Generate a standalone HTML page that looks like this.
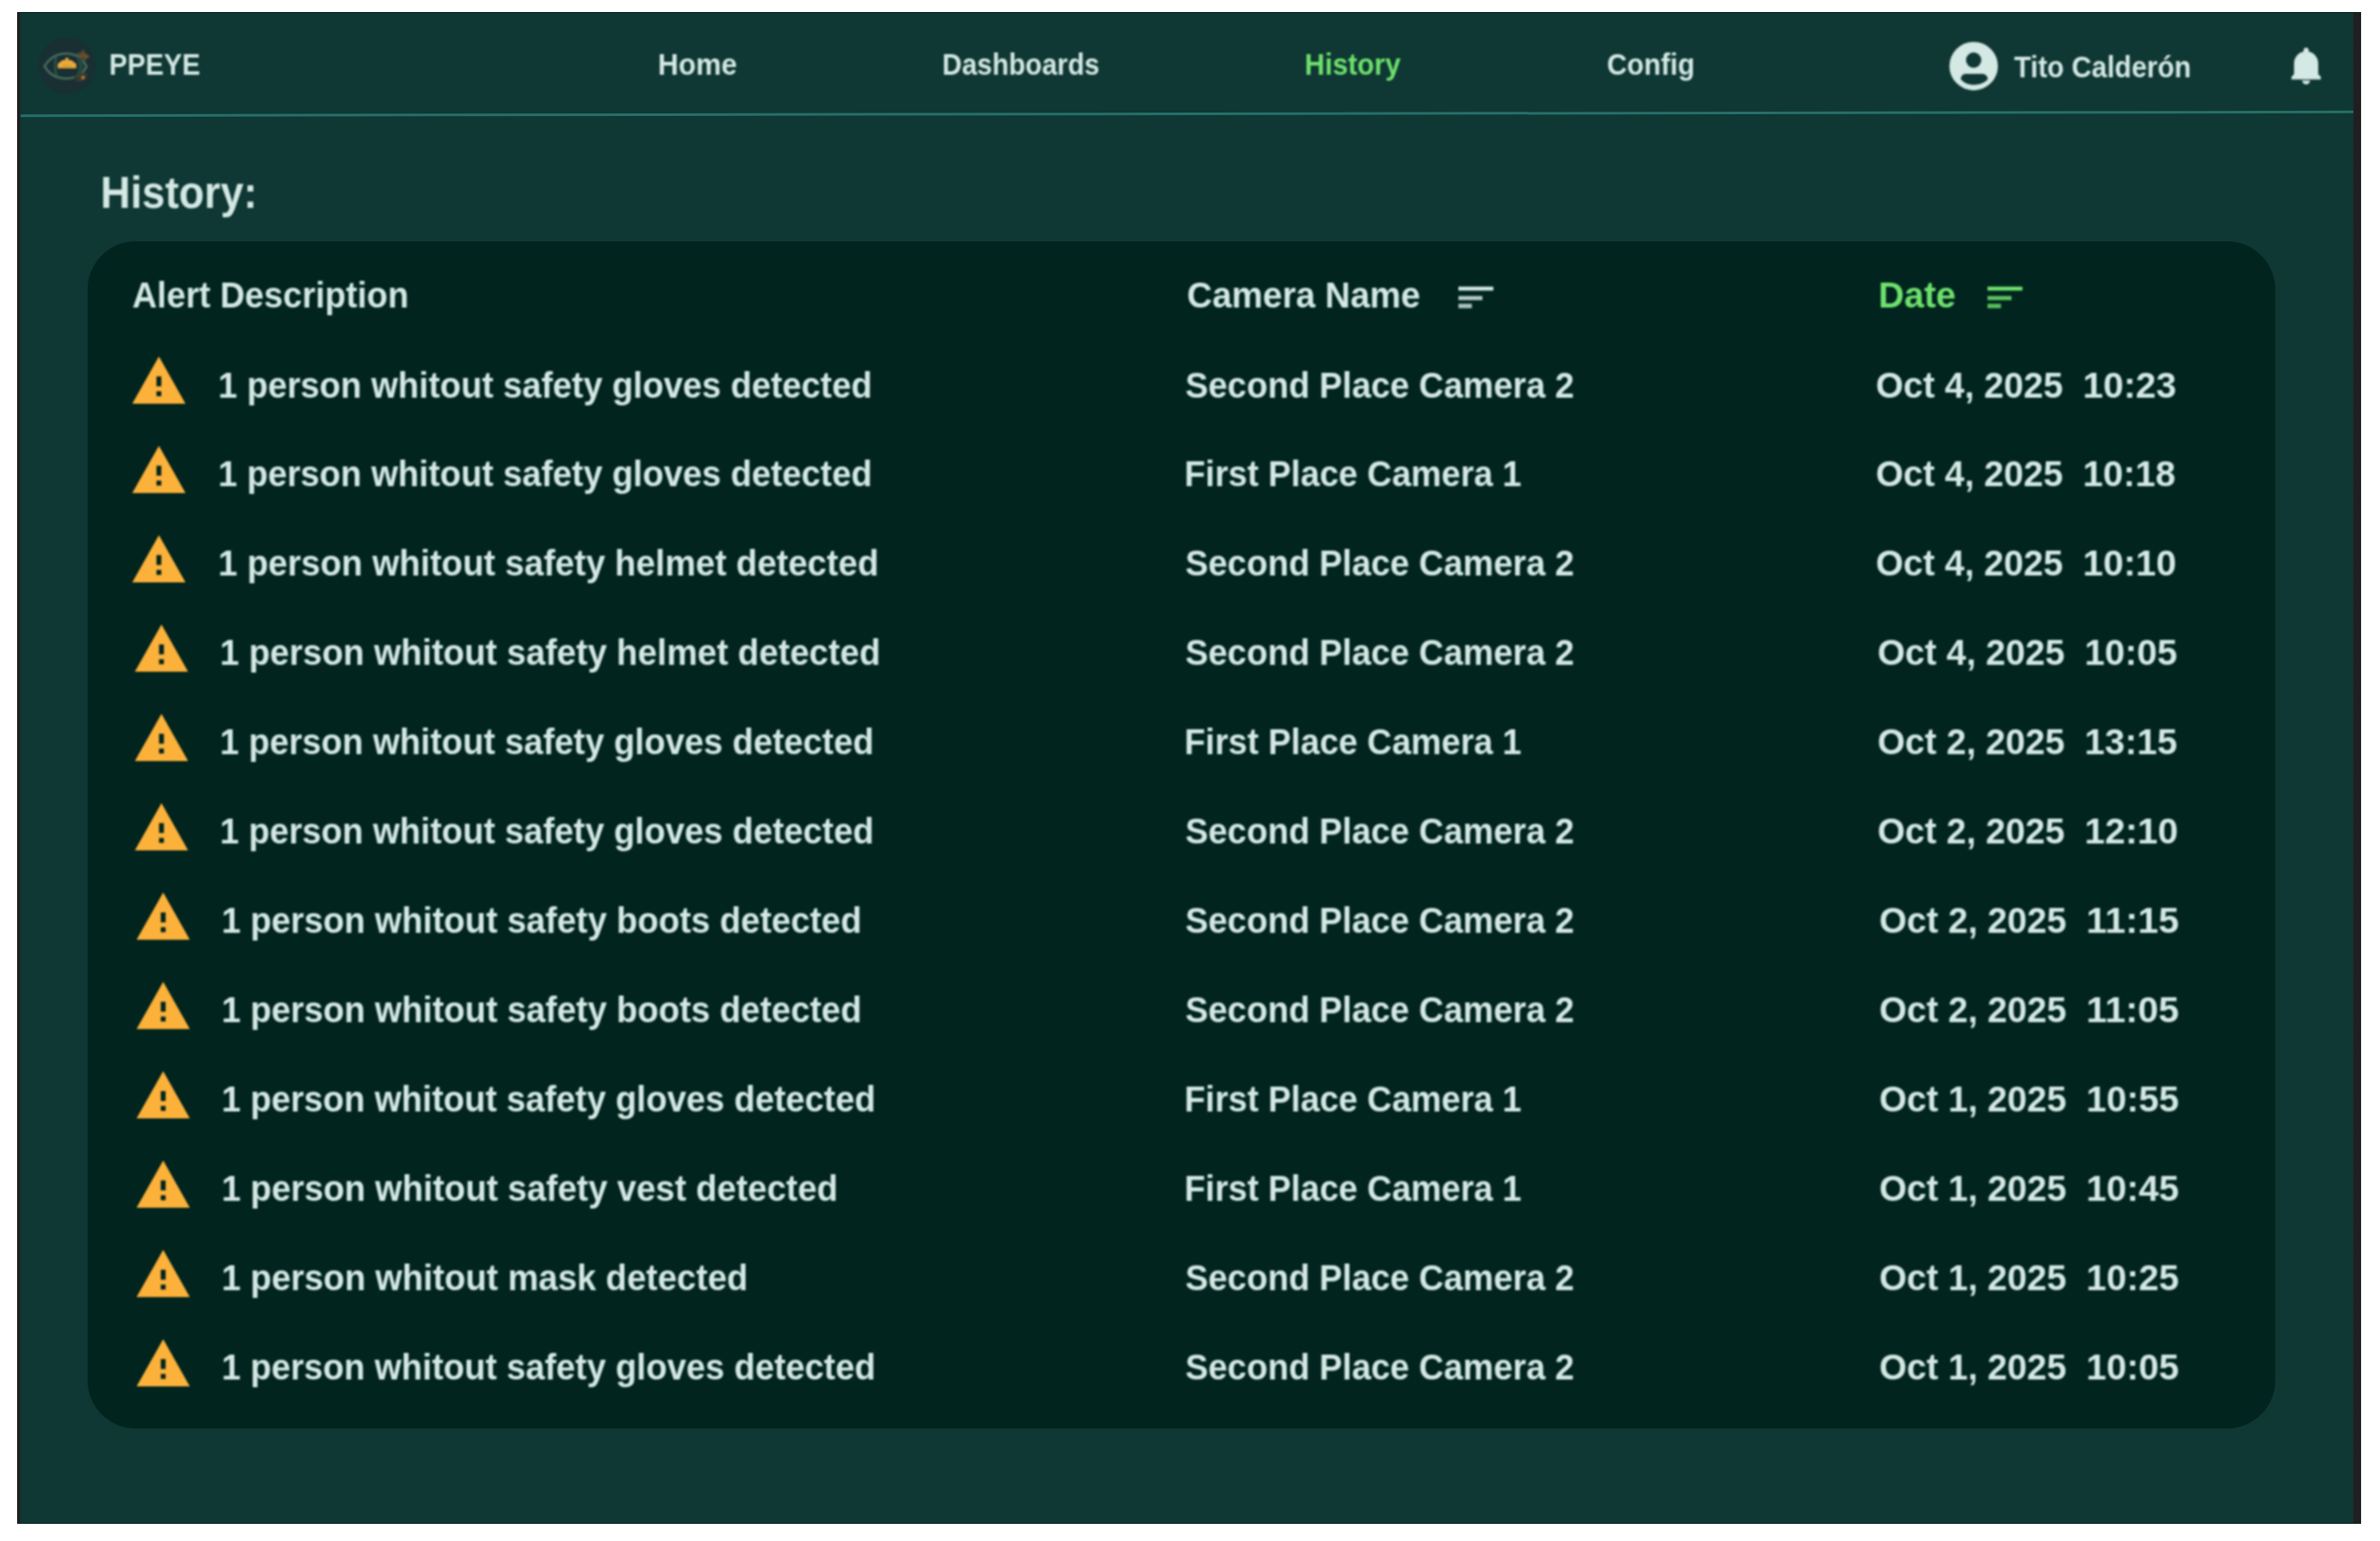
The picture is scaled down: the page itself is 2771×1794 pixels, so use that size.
<!DOCTYPE html>
<html lang="en">
<head>
<meta charset="utf-8">
<title>PPEYE - History</title>
<style>
html,body{margin:0;padding:0;background:#fff;}
body{width:2771px;height:1794px;position:relative;overflow:hidden;font-family:"Liberation Sans",Arial,sans-serif;}
#app{position:absolute;left:20px;top:14px;width:2729px;height:1760px;background:#0f3733;overflow:hidden;}
#edge-l{position:absolute;left:20px;top:14px;width:6px;height:1760px;background:linear-gradient(90deg,#111 0,#111 .7px,#1f1f1f .7px,#1f1f1f 2.6px,#183030 3.6px,#0f3733 5.5px);}
#edge-r{position:absolute;left:2737.5px;top:14px;width:11.5px;height:1760px;background:linear-gradient(90deg,#0f3733 0,#163231 1.5px,#1d2223 2.6px,#1f1f1f 4px,#1f1f1f 10.6px,#0c0c0c 10.6px);}
#edge-t{position:absolute;left:20px;top:14px;width:2729px;height:1.2px;background:#02221f;}
#edge-b{position:absolute;left:20px;top:1772.8px;width:2729px;height:1.2px;background:#02221f;}
#layer{position:absolute;left:0;top:0;width:2771px;height:1794px;filter:blur(1px);}
#layer span,#layer h1{position:absolute;margin:0;white-space:pre;line-height:1;font-weight:bold;color:#d4e8e4;transform-origin:0 0;}
#navline{position:absolute;left:23.6px;top:130.7px;width:2715.8px;height:3.4px;background:#26706a;transform-origin:50% 50%;transform:rotate(-0.09deg);}
#card{position:absolute;left:102.3px;top:280.8px;width:2546.6px;height:1382.5px;background:#01241e;border-radius:56px;}
svg{position:absolute;overflow:visible}
#logo{position:absolute;left:45.3px;top:43.5px;width:65.4px;height:65.4px;border-radius:50%;background:#192f33;}
</style>
</head>
<body>
<div id="app"></div>
<div id="edge-l"></div><div id="edge-r"></div><div id="edge-t"></div><div id="edge-b"></div>
<div id="card"></div>
<div id="navline"></div>
<div id="logo"></div>
<div id="layer">
<nav>
<svg id="eye" style="left:38px;top:36px;filter:blur(0.4px)" width="80" height="80" viewBox="38 36 80 80">
<path d="M51.8 77.2 C57 68.5 66 62.6 77 62.4 C88 62.2 96 68 100.8 77.6 C96 86.5 88 91.4 77 91.3 C66 91.2 57 86 51.8 77.2Z" fill="none" stroke="#45695a" stroke-width="2.8"/>
<path d="M66 66.5 C63.4 71 63.4 83 66 87.5" fill="none" stroke="#2e5249" stroke-width="2.6"/>
<path d="M91.5 67 C95 72 95 82 91.5 87" fill="none" stroke="#264840" stroke-width="5"/>
<path d="M67.2 79.6 V74.6 C67.2 73.6 68 73.2 69.6 73 C70 71 72 70 76.2 69.8 V67.3 H79.6 V69.8 C83.5 70 86 71 86.3 73 C88 73.2 88.8 73.6 88.8 74.6 V79.6 Z" fill="#e9a93a"/>
<rect x="73" y="76.6" width="10" height="1.2" fill="#c8912f"/>
<path d="M89.5 61.5 h5.5 v-3.3 h3.2 v3.3 h2.6 v2.8 h3.2 v3.2 h-3.4 v3 h-3 v-3 h-2.6 v-3.2 h-5.5z" fill="#5f4a2c"/>
<rect x="92.8" y="64.4" width="3.2" height="2.9" fill="#7d552c"/>
<rect x="98.6" y="64.4" width="3.2" height="2.9" fill="#7d552c"/>
<path d="M86.5 87.5 h6 v-2 h8.5 v6 h-3 v3 h-6 v-3.5 h-5.5z" fill="#3f3d2b"/>
<rect x="95" y="88.8" width="3.3" height="3.1" fill="#cf8834"/>
<rect x="89" y="92" width="3.2" height="2.6" fill="#4a3f28"/>
</svg>
<span class="brand" style="left:127.28px;top:57px;font-size:35px;transform:scaleX(0.9093)">PPEYE</span>
<span class="nav" style="left:765.80px;top:57px;font-size:35px;transform:scaleX(0.9486)">Home</span>
<span class="nav" style="left:1096.69px;top:57px;font-size:35px;transform:scaleX(0.9054)">Dashboards</span>
<span class="nav" style="left:1518.75px;top:57px;font-size:35px;transform:scaleX(0.9260);color:#6fe26d">History</span>
<span class="nav" style="left:1871.08px;top:57px;font-size:35px;transform:scaleX(0.9224)">Config</span>
<span class="user" style="left:2345.10px;top:60px;font-size:35px;transform:scaleX(0.9166)">Tito Calderón</span>
<svg id="avatar" style="left:2264.2px;top:42.7px" width="67.8" height="67.8" viewBox="0 0 24 24">
<circle cx="12" cy="12" r="10" fill="#d4e8e4"/>
<circle cx="12" cy="9.55" r="3.15" fill="#0f3733"/>
<path d="M6.7 17.45 C6.7 16.2 7.5 15.25 8.8 15.25 H15.5 C16.8 15.25 17.8 16.2 17.8 17.45 C16.8 18.75 14.8 19.7 12.25 19.7 S7.7 18.75 6.7 17.45Z" fill="#0f3733"/>
</svg>
<svg id="bell" style="left:2659px;top:49.6px" width="52" height="52" viewBox="0 0 24 24">
<path fill="#d4e8e4" d="M12 2.5 C12.9 2.5 13.4 3.1 13.4 3.9 V4.6 C16.4 5.3 18.5 7.9 18.5 11 V16.7 L19.9 18.2 V19.6 H4.1 V18.2 L5.5 16.7 V11 C5.5 7.9 7.6 5.3 10.6 4.6 V3.9 C10.6 3.1 11.1 2.5 12 2.5Z M9.9 20.2 H14.1 C14.1 21.4 13.2 22.3 12 22.3 S9.9 21.4 9.9 20.2Z"/>
</svg>
</nav>
<main>
<h1 class="h1" style="left:117.26px;top:199px;font-size:51px;transform:scaleX(0.9477)">History:</h1>
<section>
<header>
<span class="th" style="left:153.65px;top:323px;font-size:42px;transform:scaleX(0.9513)">Alert Description</span>
<span class="th" style="left:1382.03px;top:323px;font-size:42px;transform:scaleX(0.9698)">Camera Name</span>
<span class="th" style="left:2186.62px;top:323px;font-size:42px;transform:scaleX(0.9900);color:#6fe26d">Date</span>
<svg class="sort" style="left:1698.4px;top:330px" width="44" height="32" viewBox="0 0 44 32"><rect x="0" y="3.7" width="40.7" height="4.6" fill="#d4e8e4"/><rect x="0" y="14.6" width="28" height="4.8" fill="#d4e8e4" opacity=".85"/><rect x="0" y="23.6" width="15.7" height="5.2" fill="#d4e8e4" opacity=".8"/></svg>
<svg class="sort" style="left:2313.6px;top:330px" width="44" height="32" viewBox="0 0 44 32"><rect x="0" y="3.7" width="40.7" height="4.6" fill="#6fe26d"/><rect x="0" y="14.6" width="28" height="4.8" fill="#6fe26d" opacity=".85"/><rect x="0" y="23.6" width="15.7" height="5.2" fill="#6fe26d" opacity=".8"/></svg>
</header>
<article>
<svg class="warn" style="left:154.0px;top:415.0px" width="62.0" height="55.0" viewBox="0 0 22 19" preserveAspectRatio="none"><path fill="#fcb13a" fill-rule="evenodd" d="M0 19h22L11 0 0 19zm12-3h-2v-2h2v2zm0-4h-2V8h2v4z"/></svg>
<span class="td" style="left:254.19px;top:428px;font-size:42px;transform:scaleX(0.9540)">1 person whitout safety gloves detected</span>
<span class="td" style="left:1379.94px;top:428px;font-size:42px;transform:scaleX(0.9553)">Second Place Camera 2</span>
<span class="td" style="left:2183.92px;top:428px;font-size:42px;transform:scaleX(0.9821)">Oct 4, 2025</span>
<span class="td" style="left:2425.07px;top:428px;font-size:42px;transform:scaleX(1.0148)">10:23</span>
</article>
<article>
<svg class="warn" style="left:154.0px;top:519.0px" width="62.0" height="55.0" viewBox="0 0 22 19" preserveAspectRatio="none"><path fill="#fcb13a" fill-rule="evenodd" d="M0 19h22L11 0 0 19zm12-3h-2v-2h2v2zm0-4h-2V8h2v4z"/></svg>
<span class="td" style="left:254.19px;top:531px;font-size:42px;transform:scaleX(0.9540)">1 person whitout safety gloves detected</span>
<span class="td" style="left:1379.00px;top:531px;font-size:42px;transform:scaleX(0.9497)">First Place Camera 1</span>
<span class="td" style="left:2183.92px;top:531px;font-size:42px;transform:scaleX(0.9821)">Oct 4, 2025</span>
<span class="td" style="left:2425.09px;top:531px;font-size:42px;transform:scaleX(1.0051)">10:18</span>
</article>
<article>
<svg class="warn" style="left:154.0px;top:623.0px" width="62.0" height="55.0" viewBox="0 0 22 19" preserveAspectRatio="none"><path fill="#fcb13a" fill-rule="evenodd" d="M0 19h22L11 0 0 19zm12-3h-2v-2h2v2zm0-4h-2V8h2v4z"/></svg>
<span class="td" style="left:254.18px;top:635px;font-size:42px;transform:scaleX(0.9607)">1 person whitout safety helmet detected</span>
<span class="td" style="left:1379.94px;top:635px;font-size:42px;transform:scaleX(0.9553)">Second Place Camera 2</span>
<span class="td" style="left:2183.92px;top:635px;font-size:42px;transform:scaleX(0.9821)">Oct 4, 2025</span>
<span class="td" style="left:2425.07px;top:635px;font-size:42px;transform:scaleX(1.0148)">10:10</span>
</article>
<article>
<svg class="warn" style="left:156.5px;top:727.0px" width="62.0" height="55.0" viewBox="0 0 22 19" preserveAspectRatio="none"><path fill="#fcb13a" fill-rule="evenodd" d="M0 19h22L11 0 0 19zm12-3h-2v-2h2v2zm0-4h-2V8h2v4z"/></svg>
<span class="td" style="left:255.58px;top:739px;font-size:42px;transform:scaleX(0.9607)">1 person whitout safety helmet detected</span>
<span class="td" style="left:1379.94px;top:739px;font-size:42px;transform:scaleX(0.9553)">Second Place Camera 2</span>
<span class="td" style="left:2185.72px;top:739px;font-size:42px;transform:scaleX(0.9821)">Oct 4, 2025</span>
<span class="td" style="left:2426.89px;top:739px;font-size:42px;transform:scaleX(1.0051)">10:05</span>
</article>
<article>
<svg class="warn" style="left:156.5px;top:831.0px" width="62.0" height="55.0" viewBox="0 0 22 19" preserveAspectRatio="none"><path fill="#fcb13a" fill-rule="evenodd" d="M0 19h22L11 0 0 19zm12-3h-2v-2h2v2zm0-4h-2V8h2v4z"/></svg>
<span class="td" style="left:255.59px;top:843px;font-size:42px;transform:scaleX(0.9540)">1 person whitout safety gloves detected</span>
<span class="td" style="left:1379.00px;top:843px;font-size:42px;transform:scaleX(0.9497)">First Place Camera 1</span>
<span class="td" style="left:2185.72px;top:843px;font-size:42px;transform:scaleX(0.9821)">Oct 2, 2025</span>
<span class="td" style="left:2426.89px;top:843px;font-size:42px;transform:scaleX(1.0051)">13:15</span>
</article>
<article>
<svg class="warn" style="left:156.5px;top:934.9px" width="62.0" height="55.0" viewBox="0 0 22 19" preserveAspectRatio="none"><path fill="#fcb13a" fill-rule="evenodd" d="M0 19h22L11 0 0 19zm12-3h-2v-2h2v2zm0-4h-2V8h2v4z"/></svg>
<span class="td" style="left:255.59px;top:947px;font-size:42px;transform:scaleX(0.9540)">1 person whitout safety gloves detected</span>
<span class="td" style="left:1379.94px;top:947px;font-size:42px;transform:scaleX(0.9553)">Second Place Camera 2</span>
<span class="td" style="left:2185.72px;top:947px;font-size:42px;transform:scaleX(0.9821)">Oct 2, 2025</span>
<span class="td" style="left:2426.87px;top:947px;font-size:42px;transform:scaleX(1.0148)">12:10</span>
</article>
<article>
<svg class="warn" style="left:159.2px;top:1038.9px" width="62.0" height="55.0" viewBox="0 0 22 19" preserveAspectRatio="none"><path fill="#fcb13a" fill-rule="evenodd" d="M0 19h22L11 0 0 19zm12-3h-2v-2h2v2zm0-4h-2V8h2v4z"/></svg>
<span class="td" style="left:257.59px;top:1051px;font-size:42px;transform:scaleX(0.9561)">1 person whitout safety boots detected</span>
<span class="td" style="left:1379.94px;top:1051px;font-size:42px;transform:scaleX(0.9553)">Second Place Camera 2</span>
<span class="td" style="left:2188.02px;top:1051px;font-size:42px;transform:scaleX(0.9821)">Oct 2, 2025</span>
<span class="td" style="left:2429.14px;top:1051px;font-size:42px;transform:scaleX(1.0278)">11:15</span>
</article>
<article>
<svg class="warn" style="left:159.2px;top:1142.9px" width="62.0" height="55.0" viewBox="0 0 22 19" preserveAspectRatio="none"><path fill="#fcb13a" fill-rule="evenodd" d="M0 19h22L11 0 0 19zm12-3h-2v-2h2v2zm0-4h-2V8h2v4z"/></svg>
<span class="td" style="left:257.59px;top:1155px;font-size:42px;transform:scaleX(0.9561)">1 person whitout safety boots detected</span>
<span class="td" style="left:1379.94px;top:1155px;font-size:42px;transform:scaleX(0.9553)">Second Place Camera 2</span>
<span class="td" style="left:2188.02px;top:1155px;font-size:42px;transform:scaleX(0.9821)">Oct 2, 2025</span>
<span class="td" style="left:2429.14px;top:1155px;font-size:42px;transform:scaleX(1.0278)">11:05</span>
</article>
<article>
<svg class="warn" style="left:159.2px;top:1246.9px" width="62.0" height="55.0" viewBox="0 0 22 19" preserveAspectRatio="none"><path fill="#fcb13a" fill-rule="evenodd" d="M0 19h22L11 0 0 19zm12-3h-2v-2h2v2zm0-4h-2V8h2v4z"/></svg>
<span class="td" style="left:258.29px;top:1259px;font-size:42px;transform:scaleX(0.9540)">1 person whitout safety gloves detected</span>
<span class="td" style="left:1379.00px;top:1259px;font-size:42px;transform:scaleX(0.9497)">First Place Camera 1</span>
<span class="td" style="left:2188.02px;top:1259px;font-size:42px;transform:scaleX(0.9821)">Oct 1, 2025</span>
<span class="td" style="left:2429.19px;top:1259px;font-size:42px;transform:scaleX(1.0051)">10:55</span>
</article>
<article>
<svg class="warn" style="left:159.2px;top:1350.9px" width="62.0" height="55.0" viewBox="0 0 22 19" preserveAspectRatio="none"><path fill="#fcb13a" fill-rule="evenodd" d="M0 19h22L11 0 0 19zm12-3h-2v-2h2v2zm0-4h-2V8h2v4z"/></svg>
<span class="td" style="left:258.28px;top:1363px;font-size:42px;transform:scaleX(0.9579)">1 person whitout safety vest detected</span>
<span class="td" style="left:1379.00px;top:1363px;font-size:42px;transform:scaleX(0.9497)">First Place Camera 1</span>
<span class="td" style="left:2188.02px;top:1363px;font-size:42px;transform:scaleX(0.9821)">Oct 1, 2025</span>
<span class="td" style="left:2429.19px;top:1363px;font-size:42px;transform:scaleX(1.0051)">10:45</span>
</article>
<article>
<svg class="warn" style="left:159.2px;top:1454.9px" width="62.0" height="55.0" viewBox="0 0 22 19" preserveAspectRatio="none"><path fill="#fcb13a" fill-rule="evenodd" d="M0 19h22L11 0 0 19zm12-3h-2v-2h2v2zm0-4h-2V8h2v4z"/></svg>
<span class="td" style="left:258.28px;top:1467px;font-size:42px;transform:scaleX(0.9584)">1 person whitout mask detected</span>
<span class="td" style="left:1379.94px;top:1467px;font-size:42px;transform:scaleX(0.9553)">Second Place Camera 2</span>
<span class="td" style="left:2188.02px;top:1467px;font-size:42px;transform:scaleX(0.9821)">Oct 1, 2025</span>
<span class="td" style="left:2429.19px;top:1467px;font-size:42px;transform:scaleX(1.0051)">10:25</span>
</article>
<article>
<svg class="warn" style="left:159.2px;top:1558.9px" width="62.0" height="55.0" viewBox="0 0 22 19" preserveAspectRatio="none"><path fill="#fcb13a" fill-rule="evenodd" d="M0 19h22L11 0 0 19zm12-3h-2v-2h2v2zm0-4h-2V8h2v4z"/></svg>
<span class="td" style="left:258.29px;top:1571px;font-size:42px;transform:scaleX(0.9540)">1 person whitout safety gloves detected</span>
<span class="td" style="left:1379.94px;top:1571px;font-size:42px;transform:scaleX(0.9553)">Second Place Camera 2</span>
<span class="td" style="left:2188.02px;top:1571px;font-size:42px;transform:scaleX(0.9821)">Oct 1, 2025</span>
<span class="td" style="left:2429.19px;top:1571px;font-size:42px;transform:scaleX(1.0051)">10:05</span>
</article>
</section>
</main>
</div>
</body>
</html>
